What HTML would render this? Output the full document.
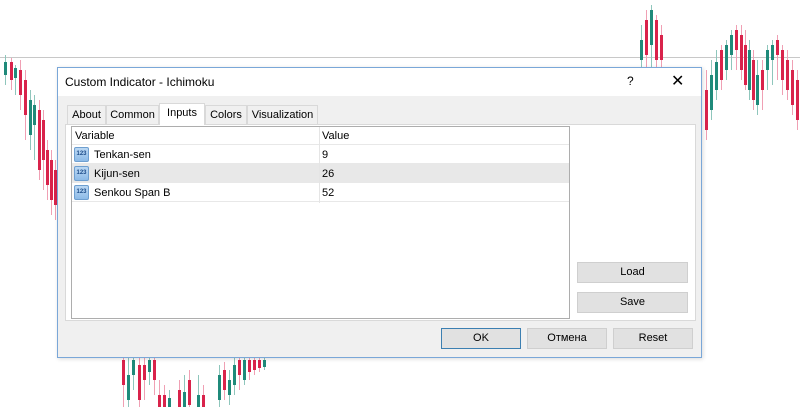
<!DOCTYPE html>
<html><head><meta charset="utf-8"><style>
*{margin:0;padding:0;box-sizing:border-box}
body{width:800px;height:407px;background:#fff;position:relative;overflow:hidden;font-family:"Liberation Sans",Arial,sans-serif;font-size:11px;color:#000}
.abs{position:absolute}
.dlg{left:57px;top:67px;width:645px;height:291px;background:#f0f0f0;border:1px solid #7aa7d8;box-shadow:1px 1px 4px rgba(0,0,0,.15)}
.title{left:0;top:0;width:643px;height:28px;background:#fff;font-size:12px}
.tab{top:37px;height:19px;border:1px solid #d9d9d9;border-bottom:none;background:#f0f0f0;padding:3px 0 0;text-align:center}
.btn{background:#e1e1e1;border:1px solid #cfcfcf;text-align:center;line-height:19px;font-size:11px}
.row{left:0;width:497px;height:19px;border-bottom:1px solid #e8e8e8}
.ic{position:absolute;left:2px;top:2px;width:15px;height:15px;background:linear-gradient(#bcd8f3,#8dbbe8);border:1px solid #6e9fd0;border-radius:2px;font-size:6px;color:#1d4d8a;line-height:13px;text-align:center;font-weight:bold}
</style></head><body>
<div class="abs" style="left:0;top:57px;width:800px;height:1px;background:#c8c8c8"></div>
<svg class="abs" style="left:0;top:0" width="800" height="407">
<g id="c"></g>
</svg>
<script>
var C=[
[4,55,85,62,75,'t'],[10,58,90,62,80,'r'],[14,65,95,68,78,'t'],[19,60,110,70,95,'r'],[24,70,140,80,115,'r'],[29,90,150,100,135,'t'],[33,95,160,105,125,'t'],[38,100,180,110,170,'r'],[42,110,190,120,160,'r'],[46,140,200,150,185,'r'],[50,150,215,160,200,'r'],[54,160,220,170,205,'r'],
[640,25,67,40,60,'t'],[645,10,67,20,55,'r'],[650,5,67,10,45,'t'],[655,15,67,20,60,'r'],[660,25,67,35,60,'r'],
[705,70,140,90,130,'r'],[710,60,120,75,110,'t'],[715,50,100,62,90,'t'],[720,45,90,50,80,'r'],[725,40,80,45,70,'t'],[730,30,70,35,55,'t'],[735,25,70,30,50,'r'],[740,25,80,35,70,'r'],[744,30,90,45,85,'r'],[748,40,100,50,90,'t'],[752,50,110,60,100,'r'],[756,60,115,75,105,'t'],[761,60,110,70,90,'r'],[766,45,90,50,70,'t'],[771,40,85,45,60,'t'],[776,35,80,40,55,'r'],[781,45,95,50,80,'r'],[786,50,100,60,90,'r'],[791,60,115,70,105,'r'],[796,70,130,80,120,'r'],
[122,357,407,360,385,'r'],[127,357,407,375,400,'t'],[132,357,390,360,375,'t'],[138,357,407,365,400,'r'],[143,357,400,365,380,'r'],[148,357,385,360,372,'t'],[153,357,395,360,380,'r'],[158,380,407,395,407,'r'],[163,385,407,395,407,'r'],[168,390,407,398,407,'t'],[178,380,407,390,407,'r'],[183,375,407,392,407,'t'],[188,370,407,380,405,'r'],[197,375,407,395,407,'t'],[202,385,407,395,407,'r'],[218,365,407,375,400,'t'],[223,362,400,370,390,'r'],[228,370,405,380,395,'t'],[233,355,395,365,385,'t'],[238,357,390,360,375,'r'],[243,357,385,360,380,'t'],[248,357,380,360,372,'r'],[253,357,375,360,370,'r'],[258,357,372,360,368,'r'],[263,357,370,360,367,'t']
];
var s='';C.forEach(function(c){var col=c[5]=='r'?'#d9234b':'#1f8a7a';var lc=c[5]=='r'?'#f0a0b4':'#8fc6bc';s+='<line x1="'+(c[0]+1.5)+'" y1="'+c[1]+'" x2="'+(c[0]+1.5)+'" y2="'+c[2]+'" stroke="'+lc+'"/><rect x="'+c[0]+'" y="'+c[3]+'" width="3" height="'+(c[4]-c[3])+'" fill="'+col+'"/>';});
document.getElementById('c').innerHTML=s;
</script>
<div class="abs dlg">
 <div class="abs title"><span class="abs" style="left:7px;top:7px">Custom Indicator - Ichimoku</span>
  <span class="abs" style="left:569px;top:6px;font-size:12px">?</span>
  <span class="abs" style="left:613px;top:3px;font-size:16px">✕</span></div>
 <div class="abs tab" style="left:9px;width:39px">About</div>
 <div class="abs tab" style="left:48px;width:53px">Common</div>
 <div class="abs tab" style="left:101px;width:46px;top:35px;height:22px;background:#fff;z-index:2">Inputs</div>
 <div class="abs tab" style="left:147px;width:42px">Colors</div>
 <div class="abs tab" style="left:189px;width:71px">Visualization</div>
 <div class="abs" style="left:7px;top:56px;width:631px;height:197px;background:#fff;border:1px solid #d9d9d9"></div>
 <div class="abs" style="left:13px;top:58px;width:499px;height:193px;background:#fff;border:1px solid #adadad">
  <div class="abs row" style="top:0;height:18px"><span class="abs" style="left:3px;top:3px">Variable</span><span class="abs" style="left:250px;top:3px">Value</span></div>
  <div class="abs row" style="top:18px"><div class="ic">123</div><span class="abs" style="left:22px;top:4px">Tenkan-sen</span><span class="abs" style="left:250px;top:4px">9</span></div>
  <div class="abs row" style="top:37px;background:#e8e8e8"><div class="ic">123</div><span class="abs" style="left:22px;top:4px">Kijun-sen</span><span class="abs" style="left:250px;top:4px">26</span></div>
  <div class="abs row" style="top:56px"><div class="ic">123</div><span class="abs" style="left:22px;top:4px">Senkou Span B</span><span class="abs" style="left:250px;top:4px">52</span></div>
  <div class="abs" style="left:247px;top:0;width:1px;height:76px;background:#e5e5e5"></div>
 </div>
 <div class="abs btn" style="left:519px;top:194px;width:111px;height:21px">Load</div>
 <div class="abs btn" style="left:519px;top:224px;width:111px;height:21px">Save</div>
 <div class="abs btn" style="left:383px;top:260px;width:80px;height:21px;border-color:#3c7fb1">OK</div>
 <div class="abs btn" style="left:469px;top:260px;width:80px;height:21px">Отмена</div>
 <div class="abs btn" style="left:555px;top:260px;width:80px;height:21px">Reset</div>
</div>
</body></html>
